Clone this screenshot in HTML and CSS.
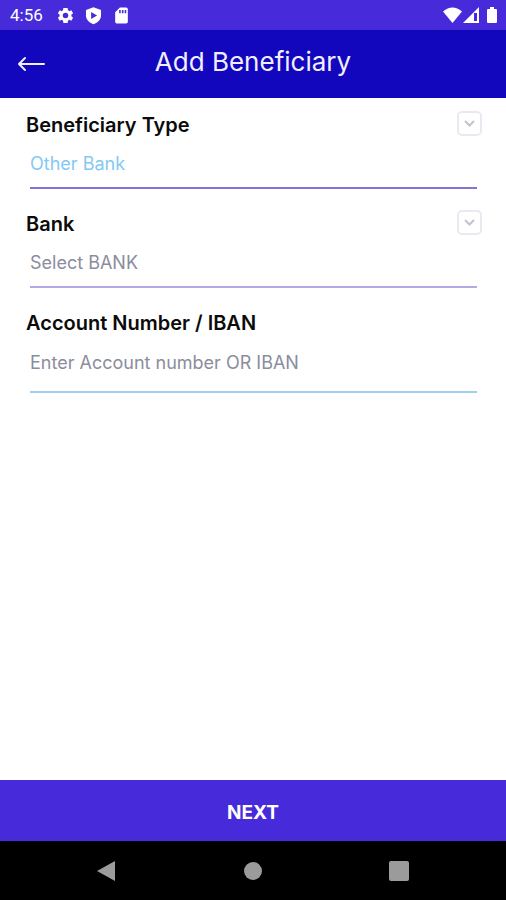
FILE: index.html
```html
<!DOCTYPE html>
<html lang="en">
<head>
<meta charset="utf-8">
<meta name="viewport" content="width=device-width, initial-scale=1">
<title>Add Beneficiary</title>
<link rel="stylesheet" href="styles.css">
</head>
<body>
<div class="status">
  <span class="time">4:56</span>
  <svg class="status-icon" viewBox="0 0 24 24" width="19" height="19" fill="currentColor"><path fill-rule="evenodd" d="M19.4 13a7.500 7.500 0 0 0 0-2l2.200-1.700-2.200-3.800-2.600 1a8 8 0 0 0-1.700-1L14.700 2.500H9.300L8.900 5.500a8 8 0 0 0-1.700 1l-2.600-1-2.200 3.800L4.600 11a7.500 7.500 0 0 0 0 2l-2.200 1.700 2.200 3.800 2.600-1a8 8 0 0 0 1.700 1l.4 3h5.400l.4-3a8 8 0 0 0 1.700-1l2.600 1 2.200-3.800zM12 15.500a3.500 3.500 0 1 1 0-7 3.500 3.500 0 0 1 0 7z"/></svg>
  <svg class="status-icon" viewBox="0 0 24 24" width="19" height="19" fill="currentColor"><path fill-rule="evenodd" d="M12 1.500 2.500 5v7c0 5 3.800 9 9.500 11 5.700-2 9.500-6 9.500-11V5zM9 7.500l7.500 4.500L9 16.500z"/></svg>
  <svg class="status-icon" viewBox="0 0 24 24" width="19" height="19" fill="currentColor"><path fill-rule="evenodd" d="M10 2h8q2 0 2 2v16q0 2-2 2H6q-2 0-2-2V8zM9 5v4h2V5zm3.500 0v4h2V5zM16 5v4h2V5z"/></svg>
  <svg class="signals" viewBox="0 0 56 20" width="56" height="20" fill="currentColor"><path d="M1 6.500Q10.500-1.500 20 6.500L10.500 18z"/><path fill-rule="evenodd" d="M37 2v16H21zM32 8v8h3V8z"/><path d="M48 2h4v2h2q1 0 1 1v12q0 1-1 1h-8q-1 0-1-1V5q0-1 1-1h2z"/></svg>
</div>
<header class="appbar">
  <button class="back" type="button" aria-label="Back"><svg viewBox="0 0 28 16" width="28" height="16" fill="none" stroke="currentColor" stroke-width="2" stroke-linecap="round" stroke-linejoin="round"><path d="M27 8H2M8 2 2 8l6 6"/></svg></button>
  <h1 class="title">Add Beneficiary</h1>
</header>
<form class="form" id="beneficiary">
  <div class="field">
    <div class="label-row">
      <label for="type">Beneficiary Type</label>
      <button class="toggle" type="button" aria-label="Open beneficiary types"><svg viewBox="0 0 11 7" width="11" height="7" fill="none" stroke="currentColor" stroke-width="2"><path d="m1 1 4.500 4.500L10 1"/></svg></button>
    </div>
    <select class="control chosen" id="type"><option>Other Bank</option></select>
  </div>
  <div class="field">
    <div class="label-row">
      <label for="bank">Bank</label>
      <button class="toggle" type="button" aria-label="Open banks"><svg viewBox="0 0 11 7" width="11" height="7" fill="none" stroke="currentColor" stroke-width="2"><path d="m1 1 4.500 4.500L10 1"/></svg></button>
    </div>
    <select class="control pale" id="bank"><option>Select BANK</option></select>
  </div>
  <div class="field">
    <div class="label-row"><label for="account">Account Number / IBAN</label></div>
    <input class="control account" id="account" type="text" placeholder="Enter Account number OR IBAN">
  </div>
</form>
<button class="next" type="submit" form="beneficiary">NEXT</button>
<nav class="system">
  <button type="button" aria-label="System back"><svg viewBox="0 0 20 22" width="20" height="22" fill="currentColor"><path d="M18 1v20L0 11z"/></svg></button>
  <button type="button" aria-label="Home"><svg viewBox="0 0 20 20" width="20" height="20" fill="currentColor"><circle cx="10" cy="10" r="9"/></svg></button>
  <button type="button" aria-label="Recent apps"><svg viewBox="0 0 20 20" width="20" height="20" fill="currentColor"><rect width="20" height="20" rx="2"/></svg></button>
</nav>
</body>
</html>
```
FILE: styles.css
```css
* {
  box-sizing: border-box;
}

body {
  margin: 0;
  min-height: 100vh;
  display: flex;
  flex-direction: column;
  background: #fff;
  color: #0b0b0b;
  font-family: Inter, "Open Sans", sans-serif;
}

button {
  border: 0;
  padding: 0;
  background: none;
  color: inherit;
  font: inherit;
}

svg {
  display: block;
}

.status {
  display: flex;
  align-items: center;
  height: 30px;
  padding: 0 8px 0 10px;
  background: #472bda;
  color: #fff;
}

.time {
  margin-right: 13px;
  font: 17px/30px Roboto, sans-serif;
}

.status-icon {
  margin-right: 9px;
}

.signals {
  margin-left: auto;
}

.appbar {
  display: grid;
  grid-template-columns: 32px 1fr 32px;
  align-items: center;
  height: 68px;
  padding: 0 16px 4px;
  background: #1307bd;
  color: #f1efff;
}

.back {
  padding: 4px 0 0 1px;
}

.title {
  margin: 0;
  text-align: center;
  font-size: 26px;
  font-weight: 400;
  line-height: 32px;
}

.form {
  flex: 1;
  display: flex;
  flex-direction: column;
  gap: 21px;
  padding: 13px 24px 24px 26px;
}

.label-row {
  display: flex;
  align-items: flex-start;
  justify-content: space-between;
  height: 28px;
  font-size: 20px;
  font-weight: 600;
  line-height: 28px;
}

.toggle {
  display: grid;
  place-items: center;
  width: 25px;
  height: 25px;
  border: 2px solid #eae9f2;
  border-radius: 5px;
  color: #c3c2d0;
}

.field {
  display: flex;
  flex-direction: column;
}

.control {
  appearance: none;
  height: 50px;
  margin: 0 5px 0 4px;
  padding: 2px 0 0;
  border: 0;
  border-bottom: 2px solid #8175d6;
  border-radius: 0;
  outline: 0;
  background: none;
  color: #8b8d9d;
  font: 18px/24px Inter, "Open Sans", sans-serif;
}

.chosen {
  color: #83c9f3;
}

.pale {
  border-color: #b5a9e4;
}

.account {
  height: 56px;
  padding-bottom: 6px;
  border-color: #9bd0f0;
}

.account::placeholder {
  color: #8b8d9d;
  opacity: 1;
}

.next {
  height: 61px;
  padding-top: 3px;
  background: #472bda;
  color: #fff;
  font-size: 19px;
  font-weight: 700;
}

.system {
  display: grid;
  grid-template-columns: repeat(3, 1fr);
  height: 59px;
  padding: 0 34px;
  background: #000;
  color: #9b9b9b;
}

.system button {
  display: grid;
  place-items: center;
}
```
